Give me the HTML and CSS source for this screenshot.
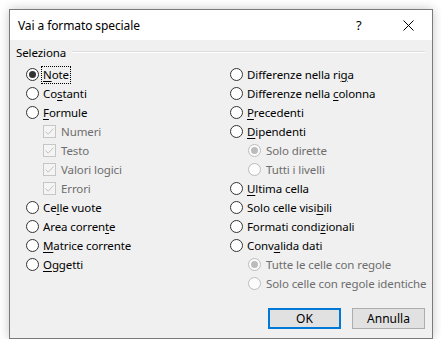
FILE: index.html
```html
<!DOCTYPE html>
<html lang="it">
<head>
    <meta charset="UTF-8">
    <title>Vai a formato speciale</title>
    <link rel="stylesheet" href="styles.css">
</head>
<body>
    <div class="dialog">
        <div class="titlebar">
            <span class="title">Vai a formato speciale</span>
            <span class="help">?</span>
            <span class="close">
                <svg width="11" height="11" viewBox="0 0 11 11"><path d="M0.5 0.5 L10.5 10.5 M10.5 0.5 L0.5 10.5" stroke="#000" stroke-width="1" fill="none"/></svg>
            </span>
        </div>

        <div class="content">
            <div class="group-head">
                <span>Seleziona</span>
                <span class="groove"></span>
            </div>

            <div class="columns">
                <div class="col">
                    <div class="row"><span class="radio checked"></span><span class="label focus"><u>N</u>ote</span></div>
                    <div class="row"><span class="radio"></span><span class="label">Co<u>s</u>tanti</span></div>
                    <div class="row"><span class="radio"></span><span class="label"><u>F</u>ormule</span></div>
                    <div class="row sub disabled"><span class="check"><svg width="11" height="11" viewBox="0 0 11 11"><path d="M1.5 5.5 L4.2 8.2 L9.5 2.5" stroke="#c2c2c2" stroke-width="1" fill="none"/></svg></span><span class="label">Numeri</span></div>
                    <div class="row sub disabled"><span class="check"><svg width="11" height="11" viewBox="0 0 11 11"><path d="M1.5 5.5 L4.2 8.2 L9.5 2.5" stroke="#c2c2c2" stroke-width="1" fill="none"/></svg></span><span class="label">Testo</span></div>
                    <div class="row sub disabled"><span class="check"><svg width="11" height="11" viewBox="0 0 11 11"><path d="M1.5 5.5 L4.2 8.2 L9.5 2.5" stroke="#c2c2c2" stroke-width="1" fill="none"/></svg></span><span class="label">Valori logici</span></div>
                    <div class="row sub disabled"><span class="check"><svg width="11" height="11" viewBox="0 0 11 11"><path d="M1.5 5.5 L4.2 8.2 L9.5 2.5" stroke="#c2c2c2" stroke-width="1" fill="none"/></svg></span><span class="label">Errori</span></div>
                    <div class="row"><span class="radio"></span><span class="label">Ce<u>l</u>le vuote</span></div>
                    <div class="row"><span class="radio"></span><span class="label">Area corren<u>t</u>e</span></div>
                    <div class="row"><span class="radio"></span><span class="label"><u>M</u>atrice corrente</span></div>
                    <div class="row"><span class="radio"></span><span class="label"><u>O</u>ggetti</span></div>
                </div>
                <div class="col">
                    <div class="row"><span class="radio"></span><span class="label">Differenze nella ri<u>g</u>a</span></div>
                    <div class="row"><span class="radio"></span><span class="label">Differenze nella <u>c</u>olonna</span></div>
                    <div class="row"><span class="radio"></span><span class="label"><u>P</u>recedenti</span></div>
                    <div class="row"><span class="radio"></span><span class="label"><u>D</u>ipendenti</span></div>
                    <div class="row sub disabled"><span class="radio checked"></span><span class="label">Solo dirette</span></div>
                    <div class="row sub disabled"><span class="radio"></span><span class="label">Tutti i livelli</span></div>
                    <div class="row"><span class="radio"></span><span class="label"><u>U</u>ltima cella</span></div>
                    <div class="row"><span class="radio"></span><span class="label">Solo celle visi<u>b</u>ili</span></div>
                    <div class="row"><span class="radio"></span><span class="label">Formati condi<u>z</u>ionali</span></div>
                    <div class="row"><span class="radio"></span><span class="label">Conv<u>a</u>lida dati</span></div>
                    <div class="row sub disabled"><span class="radio checked"></span><span class="label">Tutte le celle con regole</span></div>
                    <div class="row sub disabled"><span class="radio"></span><span class="label">Solo celle con regole identiche</span></div>
                </div>
            </div>

            <div class="buttons">
                <button class="btn default">OK</button>
                <button class="btn">Annulla</button>
            </div>
        </div>
    </div>
</body>
</html>
```

FILE: styles.css
```css
body {
    margin: 0;
    background-color: #fff;
    font-family: "Noto Sans", sans-serif;
    font-size: 11.5px;
    letter-spacing: -0.1px;
    color: #000;
}

/* Dialog window */
.dialog {
    margin: 9px 0 0 9px;
    width: 424px;
    height: 330px;
    box-sizing: border-box;
    border: 1px solid #7a7a7a;
    background-color: #f0f0f0;
    box-shadow: 0 0 10px rgba(0, 0, 0, 0.22);
    display: flex;
    flex-direction: column;
}

.titlebar {
    height: 30px;
    background-color: #fff;
    display: flex;
    align-items: center;
    padding-left: 8px;
}

.title {
    flex: 1;
    font-size: 12px;
}

.help {
    font-size: 13px;
    width: 14px;
    margin-right: 33px;
}

.close {
    display: flex;
    margin-right: 18px;
}

/* Content */
.content {
    flex: 1;
    padding: 4px 7px 0 6px;
    display: flex;
    flex-direction: column;
}

.group-head {
    height: 16px;
    display: flex;
    align-items: center;
}

.groove {
    flex: 1;
    height: 0;
    border-top: 1px solid #dcdcdc;
    border-bottom: 1px solid #fff;
    margin-left: 6px;
}

.columns {
    display: grid;
    grid-template-columns: 204px 1fr;
    margin-top: 5px;
    padding-left: 10px;
}

.row {
    height: 19px;
    display: flex;
    align-items: center;
    white-space: nowrap;
}

.row.sub {
    padding-left: 18px;
}

.row.sub .check {
    margin-left: -1px;
}

.label {
    margin-left: 3px;
    padding: 0 1px;
    line-height: 16px;
}

.row.sub .label {
    margin-left: 4px;
}

.focus {
    outline: 1px dotted #000;
    outline-offset: 0;
}

.disabled .label {
    color: #6d6d6d;
}

u {
    text-decoration-thickness: 1px;
    text-underline-offset: 2px;
}

/* Radio and checkbox */
.radio {
    width: 13px;
    height: 13px;
    box-sizing: border-box;
    border: 1px solid #333;
    border-radius: 50%;
    background-color: #fff;
    display: flex;
    align-items: center;
    justify-content: center;
    flex-shrink: 0;
}

.radio.checked::after {
    content: "";
    width: 7px;
    height: 7px;
    border-radius: 50%;
    background-color: #333;
}

.disabled .radio {
    border-color: #bcbcbc;
    background-color: #fcfcfc;
}

.disabled .radio.checked::after {
    background-color: #bcbcbc;
}

.check {
    width: 13px;
    height: 13px;
    box-sizing: border-box;
    border: 1px solid #c6c6c6;
    background-color: #f4f4f4;
    display: flex;
    align-items: center;
    justify-content: center;
    flex-shrink: 0;
}

/* Buttons */
.buttons {
    margin-top: 15px;
    display: flex;
    justify-content: flex-end;
    gap: 11px;
}

.btn {
    width: 73px;
    height: 21px;
    box-sizing: border-box;
    font-family: "Noto Sans", sans-serif;
    font-size: 12px;
    color: #000;
    background-color: #e1e1e1;
    border: 1px solid #adadad;
    padding: 0;
}

.btn.default {
    border: 2px solid #0078d7;
}
```
